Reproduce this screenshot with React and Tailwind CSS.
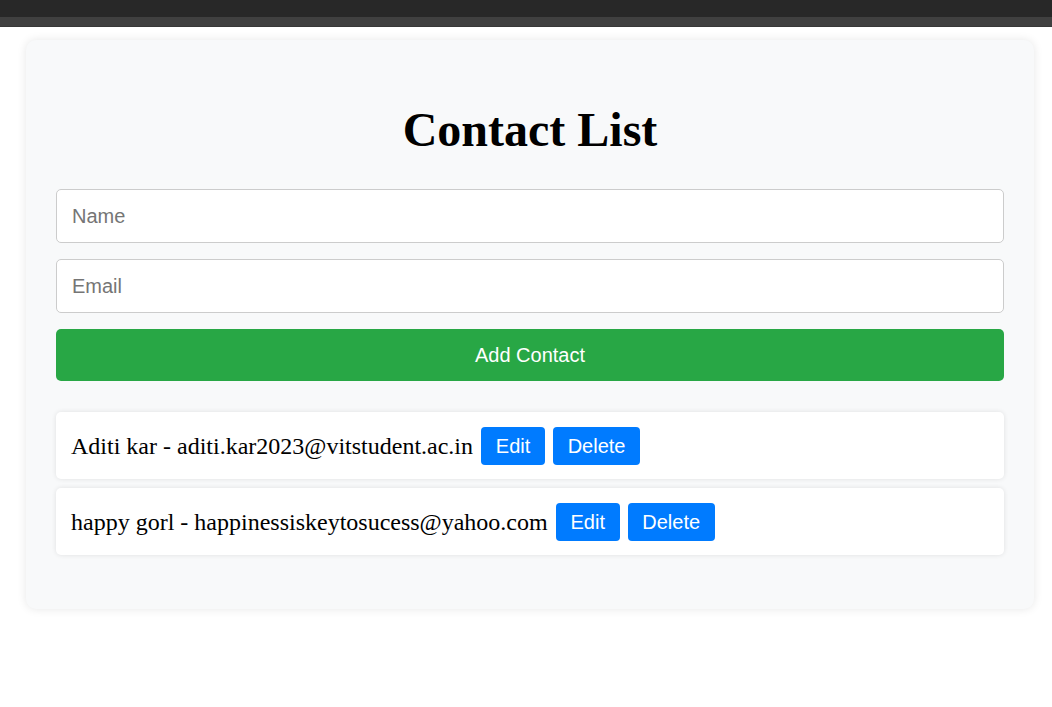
export default function App() {
  const contacts = [
    { name: "Aditi kar", email: "aditi.kar2023@vitstudent.ac.in" },
    { name: "happy gorl", email: "happinessiskeytosucess@yahoo.com" },
  ];
  return (
    <div className="min-h-[707px] bg-white">
      <div className="h-[17px] bg-[#282828]" />
      <div className="h-[10px] bg-[#404040] border-b border-[#383838]" />
      <div className="ml-[26px] mt-[13px] w-[1008px] rounded-[10px] bg-[#f8f9fa] px-[30px] pt-[30px] pb-[54px] shadow-[0_0_10px_rgba(0,0,0,0.1)]">
        <h1 className="my-[32px] text-center text-[48px] font-bold leading-[55px] text-black [font-family:'Liberation_Serif',serif]">
          Contact List
        </h1>
        <div className="flex flex-col gap-[16px] [font-family:'Liberation_Sans',Arial,sans-serif]">
          <input
            placeholder="Name"
            className="h-[54px] w-full rounded-[5px] border border-[#ccc] bg-white px-[15px] text-[20px] outline-none placeholder:text-[#757575]"
          />
          <input
            placeholder="Email"
            className="h-[54px] w-full rounded-[5px] border border-[#ccc] bg-white px-[15px] text-[20px] outline-none placeholder:text-[#757575]"
          />
          <button className="h-[52px] w-full rounded-[5px] bg-[#28a745] text-[20px] text-white">
            Add Contact
          </button>
        </div>
        <ul className="mt-[31px] flex flex-col gap-[9px]">
          {contacts.map((c) => (
            <li
              key={c.email}
              className="flex h-[67px] items-center rounded-[5px] bg-white px-[15px] shadow-[0_0_5px_rgba(0,0,0,0.1)]"
            >
              <span className="text-[24px] text-black [font-family:'Liberation_Serif',serif]">
                {c.name} - {c.email}
              </span>
              <button className="ml-[8px] h-[38px] w-[64px] rounded-[4px] bg-[#007bff] text-[20px] text-white [font-family:'Liberation_Sans',Arial,sans-serif]">
                Edit
              </button>
              <button className="ml-[8px] h-[38px] w-[87px] rounded-[4px] bg-[#007bff] text-[20px] text-white [font-family:'Liberation_Sans',Arial,sans-serif]">
                Delete
              </button>
            </li>
          ))}
        </ul>
      </div>
    </div>
  );
}
